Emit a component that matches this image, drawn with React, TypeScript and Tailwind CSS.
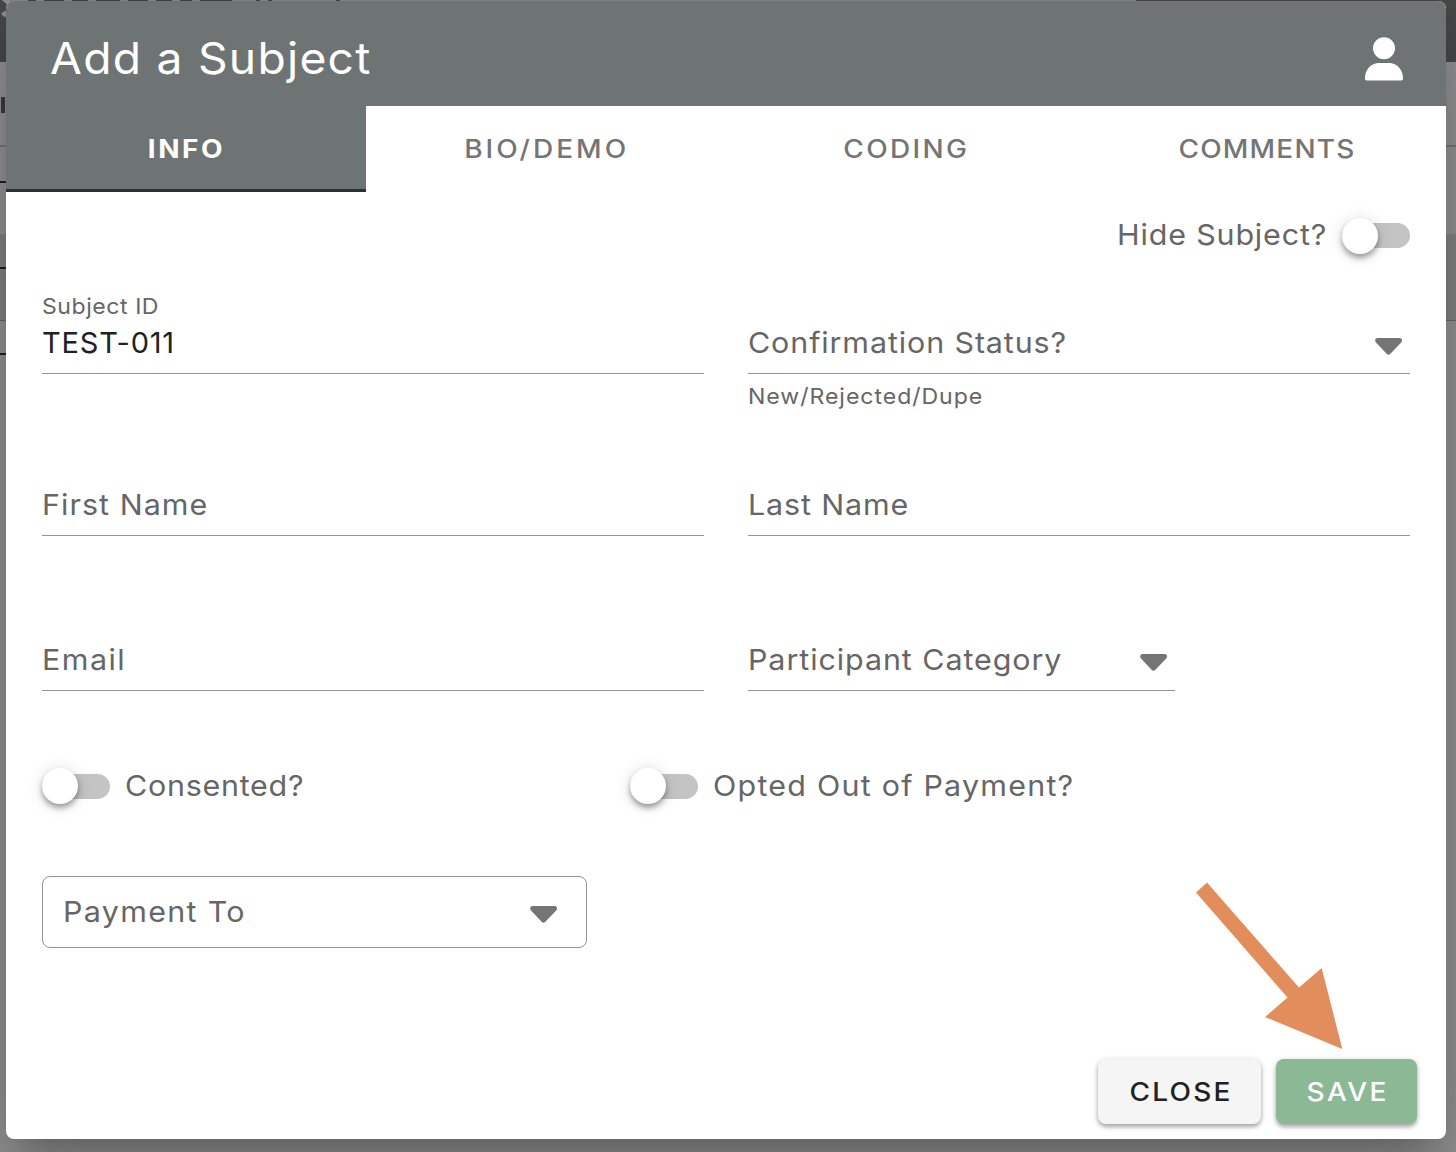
import type { ReactNode } from "react";

function Caret() {
  return (
    <svg width="28" height="17" viewBox="0 0 28 17" fill="#757575" aria-hidden="true">
      <path d="M2.6 0H24.6C27 0 27.8 2.8 26.2 4.4L15.4 15.7C14.3 17 12.7 17 11.6 15.7L1 4.4C-.6 2.8.2 0 2.6 0Z" />
    </svg>
  );
}

function Switch() {
  return (
    <span className="flex h-9 w-[68px] shrink-0 items-center rounded-full">
      <span className="flex h-[25px] w-full items-center rounded-full bg-[#c4c4c4]">
        <span className="size-9 shrink-0 rounded-full bg-white shadow-[0_4px_8px_-2px_rgba(0,0,0,0.3),0_4px_5px_rgba(0,0,0,0.18),0_1px_18px_rgba(0,0,0,0.12)]" />
      </span>
    </span>
  );
}

function Label({ className = "", children }: { className?: string; children: ReactNode }) {
  return <span className={`inline-block origin-left scale-x-105 whitespace-nowrap ${className}`}>{children}</span>;
}

function Caps({ className = "", children }: { className?: string; children: ReactNode }) {
  return <span className={`inline-block scale-x-112 ${className}`}>{children}</span>;
}

function Field({ label, helper, caret, className = "", children }: {
  label?: string;
  helper?: string;
  caret?: boolean;
  className?: string;
  children: ReactNode;
}) {
  return (
    <div className={className}>
      <div className="flex h-[84px] flex-col border-b border-[#949494]">
        <div className="h-8 text-[22px] leading-8 text-[#666]">
          {label && <Label className="tracking-[0.5px]">{label}</Label>}
        </div>
        <div className="flex h-[41px] items-center justify-between pr-[7px] leading-[41px] whitespace-nowrap">
          {children}
          {caret && <span className={helper ? "pt-[7px]" : "pt-[5px]"}><Caret /></span>}
        </div>
      </div>
      {helper && (
        <div className="mt-1.5 text-[22px] leading-8">
          <Label className="tracking-[0.9px]">{helper}</Label>
        </div>
      )}
    </div>
  );
}

function PageBehind() {
  return (
    <div className="flex h-full flex-col">
      <div className="flex h-[62px] shrink-0 items-start bg-[#484a4a]">
        <svg width="12" height="20" viewBox="0 0 12 20" fill="#939393" aria-hidden="true">
          <path d="M2 0H12L7 4.5ZM1 14L5 10.5L7 14L5 17.5Z" />
        </svg>
        <div className="flex h-px w-[1124px] gap-2 bg-[#8c8c8c] pl-4">
          <span className="w-2 bg-[#444]" />
          <span className="w-5 bg-[#444]" />
          <span className="w-4 bg-[#444]" />
          <span className="w-6 bg-[#444]" />
          <span className="w-5 bg-[#444]" />
          <span className="w-4 bg-[#444]" />
          <span className="w-3 bg-[#444]" />
          <span className="w-8 bg-[#444]" />
          <span className="ml-4 w-1 bg-[#444]" />
          <span className="w-1 bg-[#444]" />
          <span className="ml-14 w-1 bg-[#444]" />
        </div>
      </div>
      <div className="flex h-[85px] shrink-0 items-center border-b-2 border-[#777]">
        <span className="mt-0.5 ml-px h-4 w-1 bg-[#3c3c3c]" />
      </div>
      <div className="h-[87px] shrink-0 pt-[34px]">
        <div className="h-0.5 w-10 bg-[#222]" />
      </div>
      <div className="h-[87px] shrink-0 border-b border-[#6a6a6a] bg-[#868686] pt-[33px]">
        <div className="h-0.5 w-10 bg-[#222]" />
      </div>
      <div className="pt-8">
        <div className="h-0.5 w-10 bg-[#222]" />
      </div>
    </div>
  );
}

export default function App() {
  return (
    <div className="relative h-[1152px] w-[1456px] overflow-hidden bg-[#979797] font-['Inter',sans-serif]">
      <PageBehind />
      <div className="absolute top-px left-1.5 flex h-[1138px] w-[1440px] flex-col rounded-lg bg-white text-[29px] text-[#666] shadow-[0_22px_30px_-14px_rgba(0,0,0,0.2),0_48px_76px_6px_rgba(0,0,0,0.14),0_18px_92px_16px_rgba(0,0,0,0.12)]">
        <header className="flex h-[105px] shrink-0 items-center justify-between rounded-t-lg bg-[#6e7473] pr-[42px] pl-11 text-white">
          <h1 className="pt-[9px] text-[44px] leading-[60px] font-normal">
            <Label className="tracking-[1.2px]">Add a Subject</Label>
          </h1>
          <svg width="40" height="46" viewBox="0 0 40 46" fill="currentColor" className="mt-[11px] mb-px" aria-hidden="true">
            <circle cx="20" cy="12.2" r="11" />
            <path d="M3 44.6C1.7 44.6.9 43.8.9 42.6C.9 33.5 7 27 15 27H25C33 27 39 33.5 39 42.6C39 43.8 38.3 44.6 37 44.6Z" />
          </svg>
        </header>

        <nav className="grid h-[86px] shrink-0 grid-cols-4 text-center text-[25px] leading-[86px] font-medium text-[#757575]">
          <div className="h-[86px] border-b-[3px] border-[#2b3030] bg-[#6e7473] font-bold text-white">
            <Caps className="tracking-[2.2px]">INFO</Caps>
          </div>
          <div><Caps className="ml-px tracking-[2.7px]">BIO/DEMO</Caps></div>
          <div><Caps className="tracking-[2.1px]">CODING</Caps></div>
          <div><Caps className="ml-px tracking-[1.05px]">COMMENTS</Caps></div>
        </nav>

        <main className="flex grow flex-col px-9">
          <div className="mt-6 flex h-[39px] items-center justify-end gap-[15px] leading-[38px]">
            <Label className="origin-right pb-px tracking-[0.8px]">Hide Subject?</Label>
            <Switch />
          </div>

          <div className="mt-[35px] grid h-[162px] grid-cols-2 gap-x-11">
            <Field label="Subject ID"><span className="tracking-[0.8px] text-[#212121]">TEST-011</span></Field>
            <Field caret helper="New/Rejected/Dupe"><Label className="tracking-[0.84px]">Confirmation Status?</Label></Field>
          </div>
          <div className="grid h-[155px] grid-cols-2 gap-x-11">
            <Field><Label className="tracking-[1px]">First Name</Label></Field>
            <Field><Label className="tracking-[0.82px]">Last Name</Label></Field>
          </div>
          <div className="grid h-[84px] grid-cols-2 gap-x-11">
            <Field><Label className="tracking-[1.4px]">Email</Label></Field>
            <Field caret className="w-[427px]"><Label className="tracking-[0.88px]">Participant Category</Label></Field>
          </div>

          <div className="mt-[75px] flex h-10 items-center leading-10">
            <div className="flex w-[588px] items-center gap-[15px]">
              <Switch />
              <Label className="tracking-[0.7px]">Consented?</Label>
            </div>
            <div className="flex items-center gap-[15px]">
              <Switch />
              <Label className="tracking-[1.17px]">Opted Out of Payment?</Label>
            </div>
          </div>

          <div className="mt-[70px] flex h-[72px] w-[545px] items-center justify-between rounded-lg border border-[#949494] pr-7 pl-5">
            <Label className="tracking-[1.25px]">Payment To</Label>
            <span className="pt-[5px]"><Caret /></span>
          </div>
        </main>

        <footer className="mr-[29px] mb-[15px] flex h-[65px] shrink-0 justify-end gap-[15px] text-[25px] leading-[66px] font-medium">
          <button className="w-[163px] rounded-lg bg-[#f5f5f5] text-[#212121] shadow-[0_3px_4px_rgba(0,0,0,0.28),0_1px_6px_rgba(0,0,0,0.14)]">
            <Caps className="ml-[3px] tracking-[2px]">CLOSE</Caps>
          </button>
          <button className="w-[141px] rounded-lg bg-[#8bb996] text-white shadow-[0_3px_4px_rgba(0,0,0,0.28),0_1px_6px_rgba(0,0,0,0.14)]">
            <Caps className="ml-[3px] tracking-[2.2px]">SAVE</Caps>
          </button>
        </footer>
      </div>

      <svg className="absolute top-[880px] left-[1194px]" width="150" height="172" viewBox="0 0 150 172" fill="#e28d5c" aria-hidden="true">
        <path d="M13 2.5L105 107.5L127.7 88L148.3 169L71 137L93.5 117.5L2 12.5Z" />
      </svg>
    </div>
  );
}
